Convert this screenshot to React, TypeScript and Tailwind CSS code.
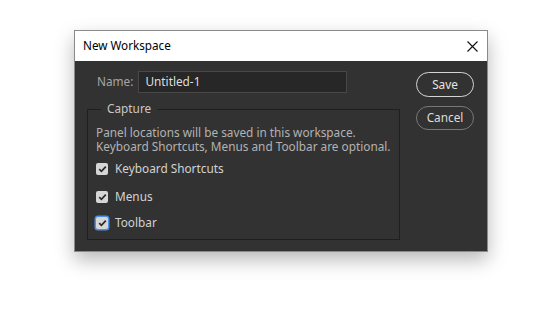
import React from 'react';

const font = { fontFamily: '"Noto Sans", "Open Sans", Arial, sans-serif' };

function CheckRow({ label, focused }: { label: string; focused?: boolean }) {
  return (
    <div className="flex items-center gap-[7px] h-[14px]">
      <span
        className={`flex items-center justify-center w-[12px] h-[12px] rounded-[2px] bg-[#d6d6d6] ${
          focused ? 'ring-[1.5px] ring-[#4d8fe0]' : ''
        }`}
      >
        <svg width="9" height="8" viewBox="0 0 9 8">
          <path d="M1.2 4.2 L3.4 6.3 L7.8 1.6" fill="none" stroke="#2a2a2a" strokeWidth="1.7" />
        </svg>
      </span>
      <span className="text-[11.8px] text-[#d2d2d2]">{label}</span>
    </div>
  );
}

export default function App() {
  return (
    <div className="w-[560px] h-[316px] bg-white pl-[74px] pt-[30px]" style={font}>
      <div className="w-[414px] h-[222px] border border-[#8a8a8a] shadow-[0_8px_18px_rgba(0,0,0,0.28)] flex flex-col">
        {/* title bar */}
        <div className="h-[30px] bg-white flex items-center justify-between pl-[8px] pr-[9px]">
          <span className="text-[11.7px] text-black">New Workspace</span>
          <svg width="11" height="11" viewBox="0 0 11 11">
            <path d="M0.5 0.5 L10.5 10.5 M10.5 0.5 L0.5 10.5" stroke="#111" strokeWidth="1.1" />
          </svg>
        </div>

        {/* body */}
        <div className="flex-1 bg-[#323232] flex pl-[12px] pr-[13px] pt-[10px]">
          <div className="w-[313px] flex flex-col">
            <div className="flex items-center pl-[10px] gap-[5px]">
              <span className="text-[11.8px] text-[#a6a6a6]">Name:</span>
              <div className="w-[209px] h-[22px] bg-[#272727] border border-[#484848] flex items-center pl-[6px] text-[11.8px] text-[#dedede]">
                Untitled-1
              </div>
            </div>

            <div className="relative mt-[16px] h-[131px] border border-[#1f1f1f] pl-[8px] pt-[15px]">
              <span className="absolute -top-[10px] left-[13px] bg-[#323232] px-[6px] text-[11.8px] text-[#c8c8c8]">
                Capture
              </span>
              <div className="text-[11.8px] leading-[14px] text-[#b2b2b2]">
                <div>Panel locations will be saved in this workspace.</div>
                <div>Keyboard Shortcuts, Menus and Toolbar are optional.</div>
              </div>
              <div className="flex flex-col mt-[9px] gap-[12px]">
                <CheckRow label="Keyboard Shortcuts" />
                <div className="mt-[2px]">
                  <CheckRow label="Menus" />
                </div>
                <CheckRow label="Toolbar" focused />
              </div>
            </div>
          </div>

          <div className="ml-[16px] flex flex-col gap-[9px] pt-[1px]">
            <div className="w-[58px] h-[25px] rounded-full border-[1.5px] border-[#d4d4d4] flex items-center justify-center text-[11.8px] text-[#e4e4e4]">
              Save
            </div>
            <div className="w-[58px] h-[24px] rounded-full border border-[#787878] flex items-center justify-center text-[11.8px] text-[#dcdcdc]">
              Cancel
            </div>
          </div>
        </div>
      </div>
    </div>
  );
}
